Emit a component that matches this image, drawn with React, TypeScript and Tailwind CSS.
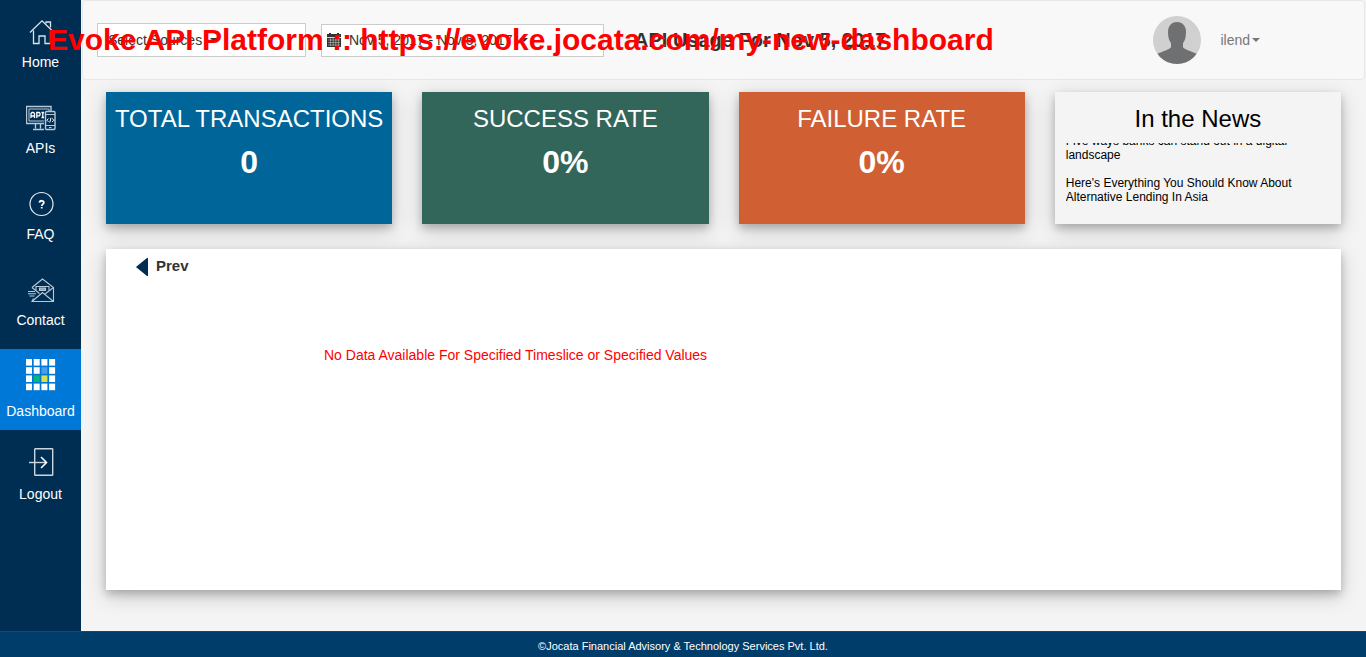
import React from "react";

const HomeIcon = () => (
  <svg viewBox="0 0 30 30" className="h-[30px] w-[30px]" fill="none" stroke="#dce5ec" strokeWidth="1.3">
    <path d="M4 14.500 16 2.800 28 14.500" />
    <path d="M7.500 12.500v13H13v-7.500h6v7.500h5.500v-13" />
    <path d="M20 5.500V4h4.500v5.500" />
  </svg>
);

const ApiIcon = () => (
  <svg viewBox="0 0 30 30" className="h-[30px] w-[30px]" fill="none" stroke="#b9c8d5">
    <path d="M25 7V2.500H.500v17H18" strokeWidth="1.400" />
    <path d="M3 17V5h20v2.500M3 17h15" />
    <path d="M9.500 20v4.500M14.500 20v4.500M7 25.500h11" strokeWidth="1.400" />
    <rect x="19.500" y="7.500" width="9.500" height="18" rx="1" strokeWidth="1.400" />
    <path d="M19.500 10.500h9.500M19.500 21.500h9.500M23 23.500h2.500" />
    <path d="m22.500 14.500-1.700 1.700 1.700 1.700M26.200 14.500l1.700 1.700-1.700 1.700M25 13.800 23.800 18.500" stroke="#fff" />
    <path d="M5 14V9.500l1-1h1.500l1 1V14M5 12h3.500M10.800 14V8.500h2.400l.8.800v1.700l-.8.900h-2.400M15.500 8.500h2.600M16.800 8.500v5M15.500 13.500h2.600" stroke="#fff" strokeWidth="1.300" />
  </svg>
);

const FaqIcon = () => (
  <svg viewBox="0 0 30 30" className="h-[30px] w-[30px]" fill="none" stroke="#e4ebf0" strokeWidth="1.2">
    <circle cx="15.500" cy="14" r="11.5" />
    <path d="M13.500 12.600c.2-2.500 4.400-2.400 4.300.1 0 1.400-2 1.600-2 3.200M15.700 17v1.600" stroke="#fff" strokeWidth="1.8" />
  </svg>
);

const ContactIcon = () => (
  <svg viewBox="0 0 30 30" className="h-[30px] w-[30px]" fill="none" stroke="#b9c8d5" strokeWidth="1.1">
    <path d="M6 11.500 16.500 3 27.500 11.500v14H6l1.500-3" />
    <path d="m27.500 11.500-8.500 6.500M6 11.500l7.500 6M6 25.500l10.500-9L27.500 25.500" />
    <path d="M10 14.500v-4h13v4" />
    <path d="M13.500 12h6v2.500h-6z" fill="#8ea4b6" />
    <path d="M2 15.500h7M2 17.800h8M3.500 20h5" />
  </svg>
);

const tiles = [0, 1, 2, 3].flatMap((row) => [0, 1, 2, 3].map((col) => ({ row, col })));

const tileColor = (row: number, col: number) => {
  if (row === 1 && col === 2) return "#4b9fe6";
  if (row === 2 && col === 1) return "#02b875";
  if (row === 2 && col === 2) return "#dbe04b";
  return "#ffffff";
};

const DashboardIcon = () => (
  <svg viewBox="0 0 30 32" className="h-8 w-[30px]">
    {tiles.map(({ row, col }) => (
      <rect key={`${row}-${col}`} x={col * 7.7} y={row * 8.2} width="6" height="6.6" fill={tileColor(row, col)} />
    ))}
  </svg>
);

const LogoutIcon = () => (
  <svg viewBox="0 0 30 30" className="h-[30px] w-[30px]" fill="none" stroke="#cbd6df" strokeWidth="1.4">
    <rect x="8.7" y="1.7" width="18" height="26.6" rx=".6" />
    <path d="M3 15.5h17" />
    <path d="m15 10 5.5 5.5L15 21" stroke="#fff" strokeWidth="1.6" />
  </svg>
);

const CalendarIcon = () => (
  <svg viewBox="0 0 14 14" className="h-3.5 w-3.5" fill="#333">
    <path d="M0 1h2V0h2v1h6V0h2v1h2v3H0z" />
    <path d="M0 4.800h14V14H0z" />
    <path d="M1 7h12M1 9.500h12M1 12h12M3.600 5v8M6.200 5v8M8.800 5v8M11.400 5v8" stroke="#fff" strokeWidth=".4" />
  </svg>
);

const Caret = () => (
  <svg viewBox="0 0 8 4" className="h-1 w-2" fill="currentColor">
    <path d="M0 0h8L4 4z" />
  </svg>
);

const Avatar = () => (
  <svg viewBox="0 0 48 48" className="h-12 w-12 rounded-full" role="img" aria-label="User">
    <rect width="48" height="48" fill="#d0d0d0" />
    <path
      d="M24 6c-6 0-9 4.500-9 10 0 5 1 8.500 3 11v4c0 2-8 4-14 7v10h40V38c-6-3-14-5-14-7v-4c2-2.500 3-6 3-11 0-5.500-3-10-9-10z"
      fill="#6f7072"
    />
  </svg>
);

const navItems = [
  { label: "Home", icon: <HomeIcon /> },
  { label: "APIs", icon: <ApiIcon /> },
  { label: "FAQ", icon: <FaqIcon /> },
  { label: "Contact", icon: <ContactIcon /> },
];

const stats = [
  { title: "TOTAL TRANSACTIONS", value: "0", color: "bg-[#006699]" },
  { title: "SUCCESS RATE", value: "0%", color: "bg-[#33665b]" },
  { title: "FAILURE RATE", value: "0%", color: "bg-[#d05f34]" },
];

const shadow = "shadow-[0_4px_8px_0_rgba(0,0,0,0.2),0_6px_20px_0_rgba(0,0,0,0.19)]";

export default function App() {
  return (
    <div className="relative flex min-h-screen flex-col bg-[#f4f4f4] font-['Liberation_Sans',Arial,sans-serif] text-sm leading-5 text-[#333]">
      <div className="flex flex-1">
        <nav className="w-[81px] shrink-0 bg-[#002e52] pt-[5px] text-white">
          {navItems.map((item) => (
            <a key={item.label} href="#" className="flex h-[86px] flex-col items-center gap-1 pt-[13px]">
              {item.icon}
              <span>{item.label}</span>
            </a>
          ))}
          <a href="#" className="flex h-[81px] flex-col items-center gap-2.5 bg-[#0078d7] pt-2.5">
            <DashboardIcon />
            <span>Dashboard</span>
          </a>
          <a href="#" className="flex h-[86px] flex-col items-center gap-[7px] pt-[17px]">
            <LogoutIcon />
            <span>Logout</span>
          </a>
        </nav>

        <div className="flex min-w-0 flex-1 flex-col">
          <header className="mx-px flex h-20 items-center rounded border border-[#e7e7e7] bg-[#f8f8f8] pl-3.5">
            <button type="button" className="flex h-[34px] w-[209px] items-center gap-2 border border-[#ccc] bg-white px-2.5">
              Select Sources
              <Caret />
            </button>
            <button type="button" className="ml-[15px] flex h-[33px] w-[283px] items-center gap-2 border border-[#ccc] bg-white px-[5px]">
              <CalendarIcon />
              <span>Nov 5, 2017 - Nov 5, 2017</span>
              <Caret />
            </button>
            <h2 className="ml-[30px] text-xl font-bold">API Usage For Nov 5, 2017</h2>
            <div className="ml-auto mr-[104px] flex items-center gap-[19px]">
              <Avatar />
              <button type="button" className="flex items-center gap-0.5 text-[#777]">
                ilend
                <Caret />
              </button>
            </div>
          </header>

          <main className="flex flex-1 flex-col gap-[25px] px-[25px] pb-[41px] pt-3">
            <div className="grid grid-cols-4 gap-[30px]">
              {stats.map((stat) => (
                <section key={stat.title} className={`h-[132px] pt-3 text-center text-white ${stat.color} ${shadow}`}>
                  <h3 className="whitespace-nowrap text-2xl leading-[30px]">{stat.title}</h3>
                  <p className="mt-2.5 text-[32px] font-bold leading-9">{stat.value}</p>
                </section>
              ))}
              <section className={`h-[132px] bg-[#f4f4f4] px-[11px] pt-3 text-black ${shadow}`}>
                <h3 className="text-center text-2xl leading-[30px]">In the News</h3>
                <div className="mt-[9px] flex h-[72px] flex-col justify-end gap-3.5 overflow-hidden pb-[11px] text-xs leading-[14px]">
                  <a href="#">Five ways banks can stand out in a digital landscape</a>
                  <a href="#">Here's Everything You Should Know About Alternative Lending In Asia</a>
                </div>
              </section>
            </div>

            <section className={`flex-1 bg-white px-[30px] pt-[7px] ${shadow}`}>
              <button type="button" className="flex items-center gap-2 text-[15px] font-bold">
                <svg viewBox="0 0 12 20" className="h-5 w-3" fill="#002e52">
                  <path d="M11 2q1-.5 1 .5v17q0 1-1 .5L.500 11.500q-.5-.5 0-1z" />
                </svg>
                Prev
              </button>
              <p className="ml-[188px] mt-[69px] text-[#f00]">No Data Available For Specified Timeslice or Specified Values</p>
            </section>
          </main>
        </div>
      </div>

      <footer className="flex h-[26px] items-center justify-center border-t border-[#114a73] bg-[#003d6b] pt-0.5 text-[11px] text-white">
        ©Jocata Financial Advisory &amp; Technology Services Pvt. Ltd.
      </footer>

      <h1 className="pointer-events-none absolute left-12 top-5 whitespace-nowrap text-3xl font-bold leading-10 text-[#f00]">
        Evoke API Platform :: https://evoke.jocata.com/my-new-dashboard
      </h1>
    </div>
  );
}
